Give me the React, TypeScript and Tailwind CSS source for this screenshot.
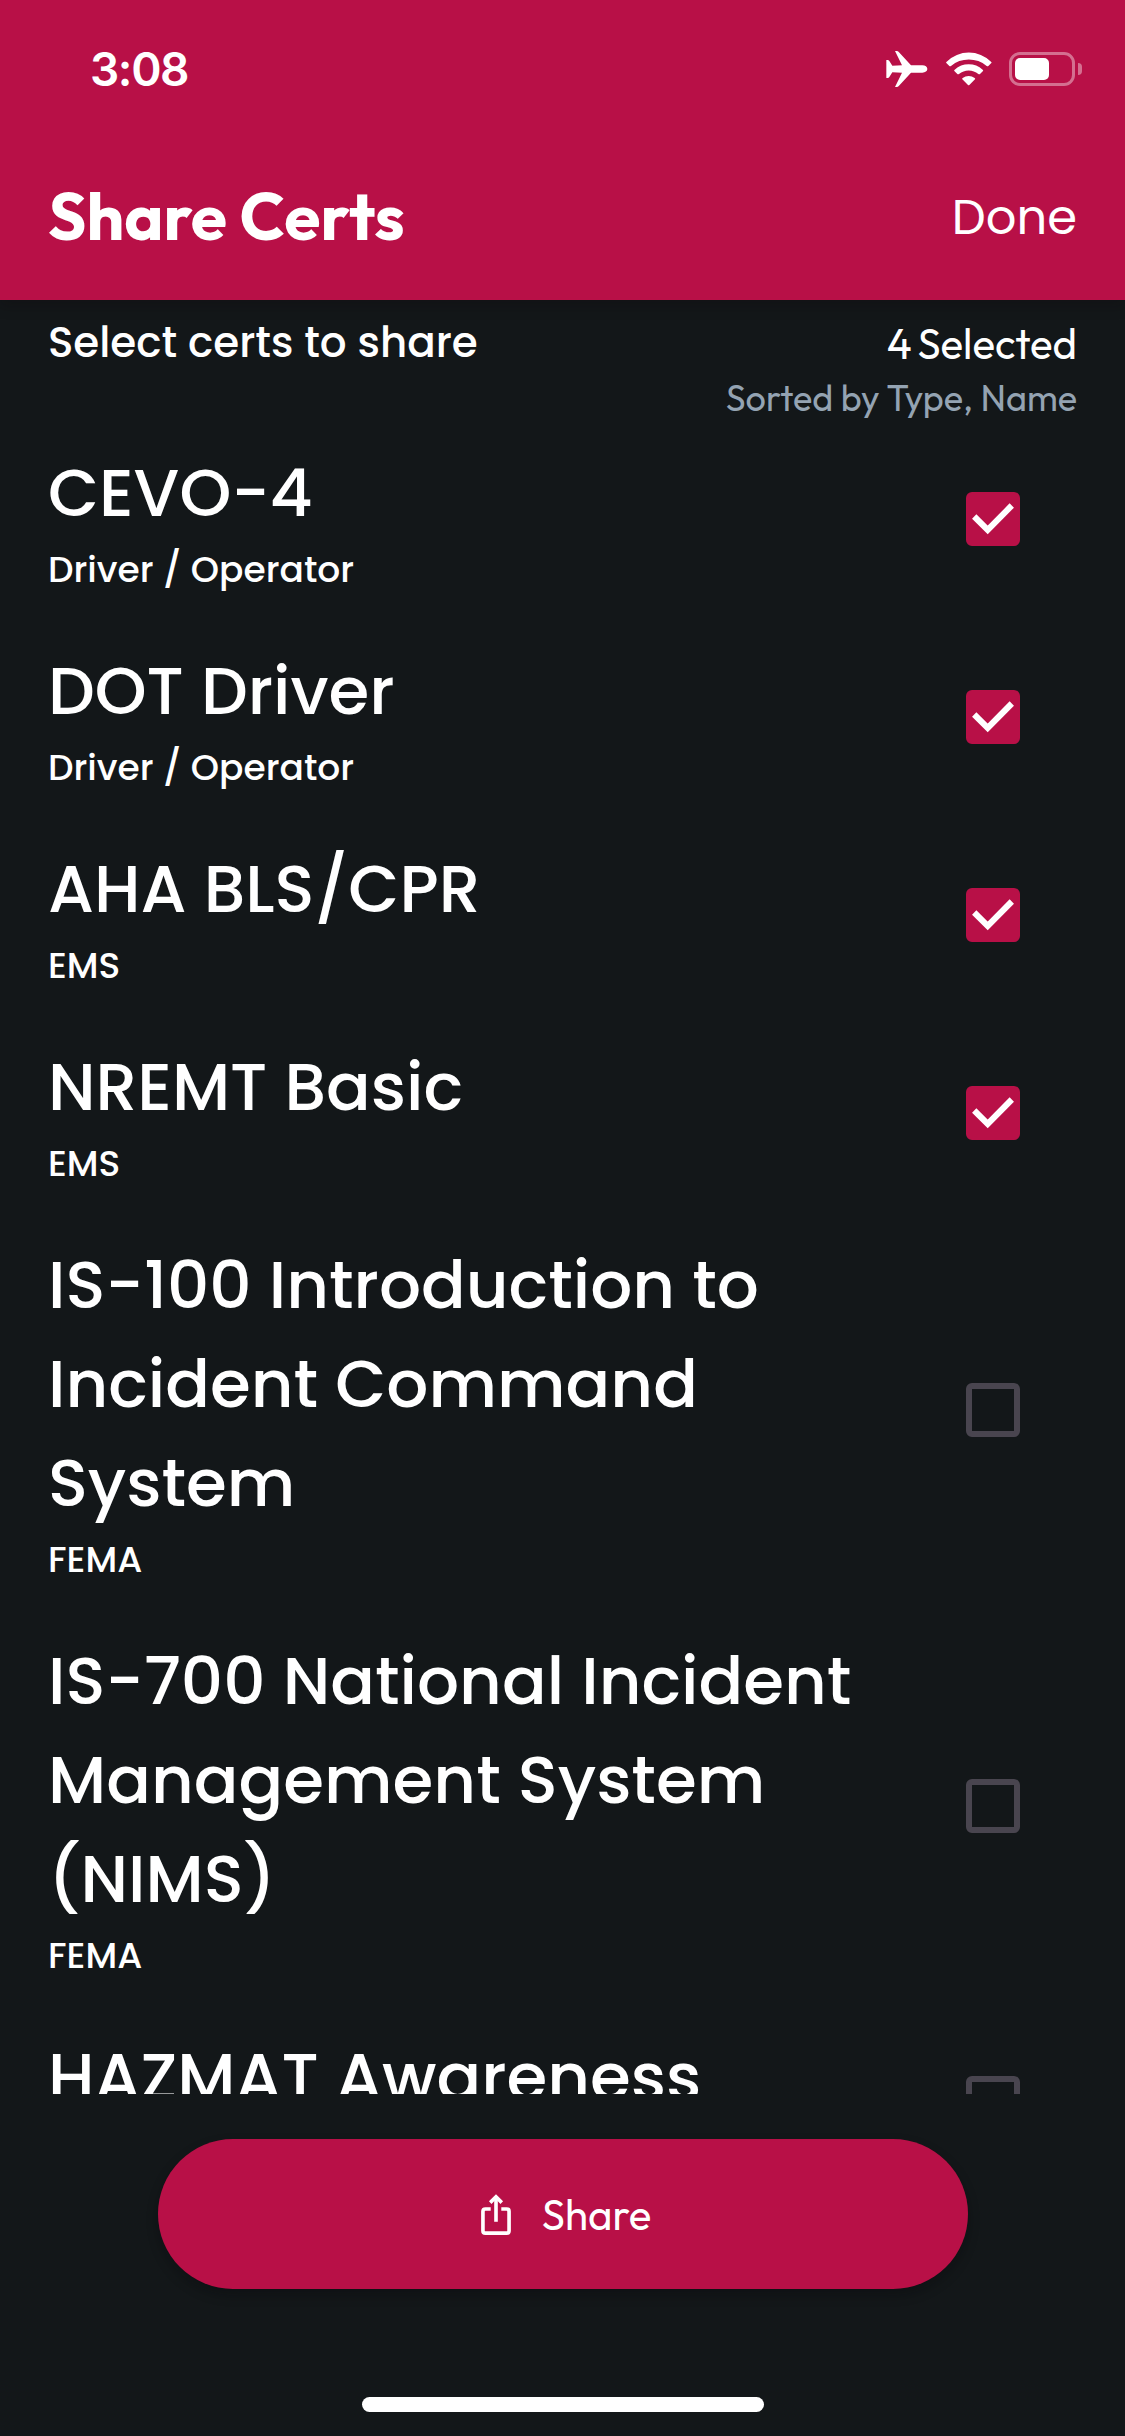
type Cert = { name: string; type: string; selected: boolean };

const certs: Cert[] = [
  { name: "CEVO-4", type: "Driver / Operator", selected: true },
  { name: "DOT Driver", type: "Driver / Operator", selected: true },
  { name: "AHA BLS/CPR", type: "EMS", selected: true },
  { name: "NREMT Basic", type: "EMS", selected: true },
  { name: "IS-100 Introduction to Incident Command System", type: "FEMA", selected: false },
  { name: "IS-700 National Incident Management System (NIMS)", type: "FEMA", selected: false },
  { name: "HAZMAT Awareness", type: "", selected: false },
];

function PlaneIcon() {
  return (
    <svg className="h-9 w-[42px]" viewBox="0 0 126 108" fill="white">
      <path d="M1 27 H5 Q8 27 10 30 L19 44 L48 43 L27 0 H32 Q36 0 39 4 L75 43 H109 C118 43 124 48 124 54 C124 60 118 65 109 65 H75 L39 104 Q36 108 32 108 H27 L48 65 L19 64 L10 78 Q8 81 5 81 H1 Z" />
    </svg>
  );
}

function WifiIcon() {
  return (
    <svg className="h-[34px] w-[46px]" viewBox="0 0 138 102" fill="white">
      <path d="M2 29 A95 95 0 0 1 135 29 Q138 31 136 33 L127 42 Q125 44 122 42 A82 82 0 0 0 15 42 Q12 44 10 42 L1 33 Q-1 31 2 29 Z" />
      <path d="M26 53 A63 63 0 0 1 110 53 Q113 55 111 57 L102 66 Q100 68 97 66 A45 45 0 0 0 39 66 Q36 68 34 66 L25 57 Q23 55 26 53 Z" />
      <path d="M50 78 A29 29 0 0 1 86 78 Q89 80 87 82 L70 99 Q68 101 66 99 L49 82 Q47 80 50 78 Z" />
    </svg>
  );
}

function Battery() {
  return (
    <div className="flex items-center gap-[3px]">
      <div className="h-[34px] w-[66px] rounded-[11px] border-[3px] border-white/40 p-[3px]">
        <div className="h-[22px] w-[34px] rounded-[5px] bg-white" />
      </div>
      <div className="h-3 w-1 rounded-r-full bg-white/40" />
    </div>
  );
}

function ShareIcon() {
  return (
    <svg className="h-[41px] w-[30px]" viewBox="0 0 90 124" fill="none" stroke="white" strokeWidth="11">
      <path d="M29 45.500 H13 Q5.500 45.500 5.500 53 V111 Q5.500 118.500 13 118.500 H77 Q84.500 118.500 84.500 111 V53 Q84.500 45.500 77 45.500 H61" />
      <path d="M45 84 V10" />
      <path d="M27.500 26 L45 8.500 L62.500 26" />
    </svg>
  );
}

function Checkbox({ checked }: { checked: boolean }) {
  if (!checked) {
    return <div className="mb-[3px] size-[54px] shrink-0 rounded-md border-[6px] border-[#49454f]" />;
  }
  return (
    <div className="mb-[3px] size-[54px] shrink-0 rounded-md bg-[#b81047]">
      <svg className="size-full" viewBox="0 0 54 54" fill="none" stroke="white" strokeWidth="6.100">
        <path d="M8.200 24.500 L21.700 37.900 L45.800 13.500" />
      </svg>
    </div>
  );
}

function CertRow({ cert }: { cert: Cert }) {
  return (
    <li className="flex items-center gap-14 pt-6 pr-[105px] pb-[21px] pl-12 font-[Poppins,Inter,sans-serif] font-medium">
      <div className="flex-1">
        <h2 className="text-[66px] leading-[99px]">{cert.name}</h2>
        <p className="min-h-[54px] text-[36px] leading-[54px]">{cert.type}</p>
      </div>
      <Checkbox checked={cert.selected} />
    </li>
  );
}

export default function App() {
  const count = certs.filter((c) => c.selected).length;
  return (
    <div className="flex h-[2436px] w-[1125px] flex-col overflow-hidden bg-[#131719] text-white">
      <header className="z-10 h-[300px] shrink-0 bg-[#b81047] shadow-[0_6px_12px_rgba(15,8,12,0.25)]">
        <div className="flex h-[138px] items-center justify-between pr-[43px] pl-[90px]">
          <span className="font-[Inter,sans-serif] text-[46px] leading-[46px] font-semibold tracking-[-1.400px]">3:08</span>
          <div className="flex items-center">
            <PlaneIcon />
            <div className="ml-[18px]">
              <WifiIcon />
            </div>
            <div className="ml-[17px]">
              <Battery />
            </div>
          </div>
        </div>
        <div className="flex h-[162px] items-center justify-between px-12 pb-1.5">
          <h1 className="font-[Outfit,Lato,sans-serif] text-[66px] leading-[84px] font-bold">Share Certs</h1>
          <button className="pt-1 font-[Poppins,Inter,sans-serif] text-[48px] leading-[72px]">Done</button>
        </div>
      </header>

      <section className="flex h-[120px] shrink-0 items-start justify-between px-12">
        <p className="pt-[11px] font-[Poppins,Inter,sans-serif] text-[42px] leading-[63px] font-medium">
          Select certs to share
        </p>
        <div className="flex flex-col items-end gap-[5px] pt-[17px] font-[Outfit,Lato,sans-serif]">
          <p className="text-[42px] leading-[53px] [word-spacing:-3px]">{count} Selected</p>
          <p className="text-[36px] leading-[45px] text-[#94a3b2]">Sorted by Type, Name</p>
        </div>
      </section>

      <ul className="h-[1674px] shrink-0 overflow-hidden">
        {certs.map((cert) => (
          <CertRow key={cert.name} cert={cert} />
        ))}
      </ul>

      <footer className="flex flex-1 flex-col items-center justify-between pt-[45px] pb-6">
        <button className="ml-px flex h-[150px] w-[810px] items-center justify-center gap-[31px] rounded-full bg-[#b81047] pl-1.5 font-[Outfit,Lato,sans-serif] text-[42px] leading-[53px] shadow-[0_6px_12px_rgba(8,8,10,0.3)]">
          <ShareIcon />
          <span>Share</span>
        </button>
        <div className="h-[15px] w-[402px] rounded-full bg-white" />
      </footer>
    </div>
  );
}
